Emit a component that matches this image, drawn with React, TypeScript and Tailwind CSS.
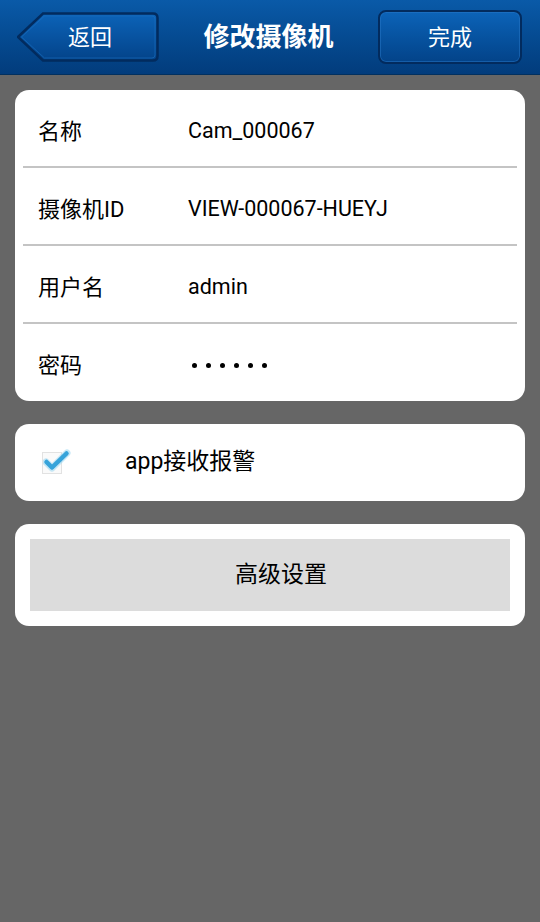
import { useState } from "react";

const rows = [
  { label: "名称", value: "Cam_000067" },
  { label: "摄像机ID", value: "VIEW-000067-HUEYJ" },
  { label: "用户名", value: "admin" },
  { label: "密码", value: "", secret: true },
];

function BackButton() {
  return (
    <button className="relative flex h-[50px] w-[142px] items-center justify-center">
      <svg className="absolute inset-0" width="142" height="50" viewBox="0 0 142 50">
        <defs>
          <linearGradient id="bb" x1="0" y1="0" x2="0" y2="1">
            <stop offset="0" stopColor="#0c63b8" />
            <stop offset="1" stopColor="#034389" />
          </linearGradient>
        </defs>
        <path
          d="M1 25 L26 1.5 H136 Q140.5 1.5 140.5 6 V44 Q140.5 48.5 136 48.5 H26 Z"
          fill="url(#bb)"
          stroke="#022b5e"
          strokeWidth="2.5"
        />
        <path
          d="M4.5 25 L27.5 4 H135 Q138 4 138 7 V43 Q138 46 135 46 H27.5 Z"
          fill="none"
          stroke="#1a6fc0"
          strokeWidth="1"
          opacity="0.6"
        />
      </svg>
      <span className="relative pl-1 text-[22px] text-white">返回</span>
    </button>
  );
}

export default function App() {
  const [alarm, setAlarm] = useState(true);

  return (
    <div
      className="flex min-h-[922px] flex-col bg-[#666666]"
      style={{ fontFamily: "Roboto, 'Noto Sans CJK SC', sans-serif" }}
    >
      {/* Title bar */}
      <div className="flex h-[75px] items-center justify-between border-b border-[#02305f] bg-gradient-to-b from-[#0a5aa8] to-[#023c7c] pl-[17px] pr-[18px]">
        <BackButton />
        <h1 className="text-[26px] font-bold text-white">修改摄像机</h1>
        <button className="flex h-[54px] w-[144px] items-center justify-center rounded-[8px] border-[2.5px] border-[#022b5e] bg-gradient-to-b from-[#0c63b8] to-[#034389] text-[22px] text-white shadow-[inset_0_0_0_1px_rgba(40,120,200,0.5)]">
          完成
        </button>
      </div>

      <div className="flex flex-col gap-[23px] px-[15px] pt-[15px]">
        {/* Camera info */}
        <div className="rounded-[14px] bg-white px-[8px]">
          {rows.map((row, i) => (
            <div
              key={row.label}
              className={
                "flex items-center pt-[6px] text-black " +
                (i < rows.length - 1 ? "h-[78px] border-b-2 border-[#c4c4c4]" : "h-[77px]")
              }
            >
              <span className="w-[165px] pl-[15px] text-[22px]">{row.label}</span>
              {row.secret ? (
                <span className="flex gap-[9px] pl-[4px]">
                  {[0, 1, 2, 3, 4, 5].map((d) => (
                    <span key={d} className="h-[5px] w-[5px] rounded-full bg-black" />
                  ))}
                </span>
              ) : (
                <span className="text-[21.5px]">{row.value}</span>
              )}
            </div>
          ))}
        </div>

        {/* Alarm toggle */}
        <div className="flex h-[77px] items-center rounded-[14px] bg-white">
          <button
            onClick={() => setAlarm(!alarm)}
            className="relative ml-[27px] h-[22px] w-[20px] border border-[#e2e2e2] bg-[#fafafa]"
          >
            {alarm && (
              <svg className="absolute -top-[4px] left-[0px]" width="28" height="24" viewBox="0 0 28 24">
                <path
                  d="M3 13 L9 19 L24 4"
                  fill="none"
                  stroke="#9fd8f2"
                  strokeWidth="7"
                  strokeLinecap="round"
                  strokeLinejoin="round"
                  opacity="0.6"
                />
                <path
                  d="M3.5 13 L9 18.5 L23.5 4.5"
                  fill="none"
                  stroke="#36a3da"
                  strokeWidth="4.5"
                  strokeLinecap="round"
                  strokeLinejoin="round"
                />
              </svg>
            )}
          </button>
          <span className="ml-[63px] text-[23px] text-black">app接收报警</span>
        </div>

        {/* Advanced */}
        <div className="rounded-[14px] bg-white p-[15px]">
          <button className="flex h-[72px] w-full items-center justify-center bg-[#dcdcdc] pl-[22px] text-[23px] text-black">
            高级设置
          </button>
        </div>
      </div>
    </div>
  );
}
